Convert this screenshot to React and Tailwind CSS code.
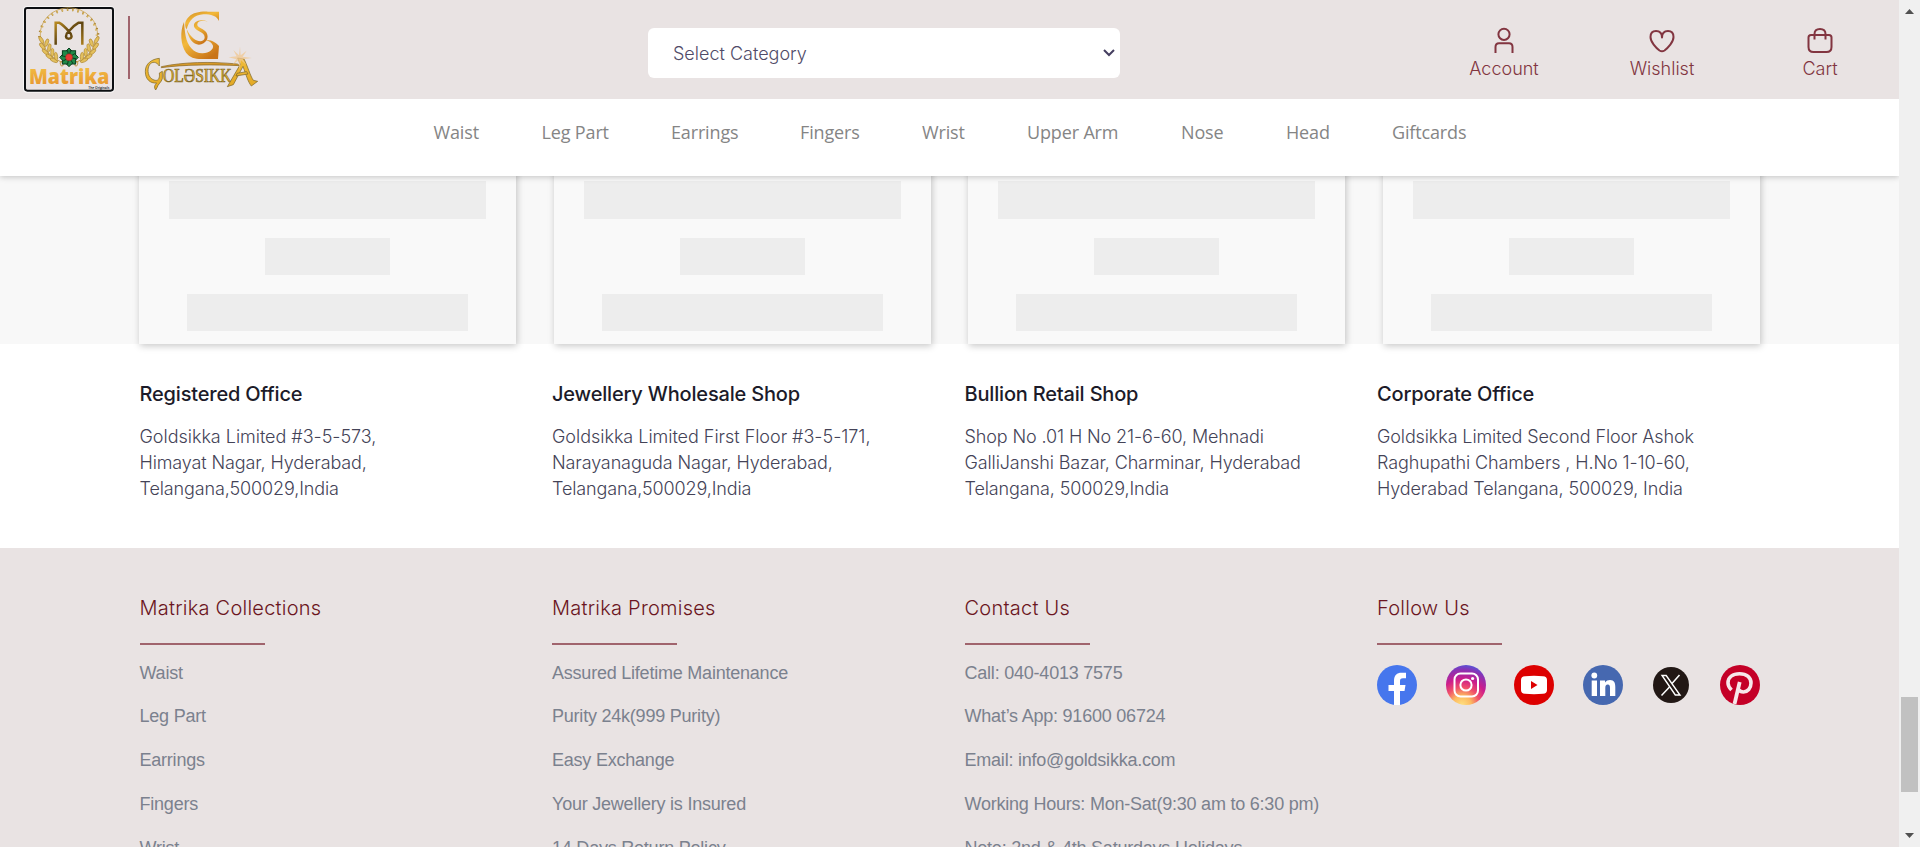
import React from "react";

const navItems = [
  ["Waist", "w-[108px]"],
  ["Leg Part", "w-[129.5px]"],
  ["Earrings", "w-[129px]"],
  ["Fingers", "w-[122px]"],
  ["Wrist", "w-[105px]"],
  ["Upper Arm", "w-[154px]"],
  ["Nose", "w-[105px]"],
  ["Head", "w-[106px]"],
  ["Giftcards", "w-[80px]"],
];

const normal = "block tracking-[-0.12px]";
const wide = "block tracking-[-0.03px]";

const offices = [
  ["Registered Office", [["Goldsikka Limited #3-5-573,", wide], ["Himayat Nagar, Hyderabad,", normal], ["Telangana,500029,India", normal]]],
  ["Jewellery Wholesale Shop", [["Goldsikka Limited First Floor #3-5-171,", wide], ["Narayanaguda Nagar, Hyderabad,", normal], ["Telangana,500029,India", normal]]],
  ["Bullion Retail Shop", [["Shop No .01 H No 21-6-60, Mehnadi", normal], ["GalliJanshi Bazar, Charminar, Hyderabad", normal], ["Telangana, 500029,India", normal]]],
  ["Corporate Office", [["Goldsikka Limited Second Floor Ashok", normal], ["Raghupathi Chambers , H.No 1-10-60,", normal], ["Hyderabad Telangana, 500029, India", normal]]],
];

const footerColumns = [
  ["Matrika Collections", ["Waist", "Leg Part", "Earrings", "Fingers", "Wrist"]],
  ["Matrika Promises", ["Assured Lifetime Maintenance", "Purity 24k(999 Purity)", "Easy Exchange", "Your Jewellery is Insured", "14 Days Return Policy"]],
  ["Contact Us", ["Call: 040-4013 7575", "What’s App: 91600 06724", "Email: info@goldsikka.com", "Working Hours: Mon-Sat(9:30 am to 6:30 pm)", "Note: 2nd & 4th Saturdays Holidays"]],
];

// Leaves of the left laurel branch: x, y, rotation
const leaves = [
  [64, 108, 60], [67, 127, 50], [76, 144, 42], [88, 158, 34], [102, 169, 24],
  [80, 116, 110], [88, 131, 100], [97, 145, 92], [108, 157, 84],
];

function LaurelBranch() {
  return (
    <g fill="#e3c05e" stroke="#a67c26" strokeWidth="1.6">
      <path d="M66 112Q80 158 132 178" fill="none" stroke="#b48a30" strokeWidth="2.500" />
      {leaves.map(([x, y, r]) => (
        <ellipse key={x + "-" + y} cx={x} cy={y} rx="12" ry="5" transform={`rotate(${r} ${x} ${y})`} />
      ))}
      <path d="M124 186Q116 174 126 172Q136 176 128 186Z" fill="none" stroke="#b9872c" strokeWidth="2.500" />
    </g>
  );
}

function MatrikaLogo() {
  return (
    <svg width="100" height="92" viewBox="0 0 300 276" className="shrink-0">
      <defs>
        <linearGradient id="mText" x1="0" y1="0" x2="0" y2="1">
          <stop offset="0" stopColor="#f5c94a" />
          <stop offset="1" stopColor="#e58f2b" />
        </linearGradient>
        <linearGradient id="mMono" x1="0" y1="0" x2="1" y2="1">
          <stop offset="0" stopColor="#b88a22" />
          <stop offset="0.5" stopColor="#5d4310" />
          <stop offset="1" stopColor="#a87c1c" />
        </linearGradient>
      </defs>
      <rect x="9" y="6" width="275" height="260" rx="12" fill="#f7f5f5" />
      <rect x="15" y="12" width="264" height="248" rx="7" fill="#e9e3e3" stroke="#0d0f12" strokeWidth="6" />
      <path d="M61 100A86 80 0 1 1 232 100" fill="none" stroke="#cba450" strokeWidth="2.500" />
      <path d="M58 100A88 82 0 1 1 235 100" fill="none" stroke="#a8802f" strokeWidth="7" strokeDasharray="4 12" />
      <path d="M62 95A83 77 0 1 1 230 95" fill="none" stroke="#d6b35c" strokeWidth="6" strokeDasharray="4 12" strokeDashoffset="6" />
      <LaurelBranch />
      <g transform="translate(294 0) scale(-1 1)"><LaurelBranch /></g>
      <path d="M107 122V56H117C128 62 138 72 147 83C158 92 157 104 146 104C136 104 135 92 145 83C154 72 165 62 176 56H187V122" fill="none" stroke="url(#mMono)" strokeWidth="7.500" />
      {[0, 45, 90, 135, 180, 225, 270, 315].map((r) => (
        <path key={r} d="M147 160L136 143L147 132L158 143Z" fill="#1f8a48" stroke="#0c3f20" strokeWidth="3" transform={`rotate(${r} 147 160)`} />
      ))}
      <circle cx="147" cy="160" r="10.500" fill="#e63a33" stroke="#8f2420" strokeWidth="1.500" />
      <text x="27" y="239" fontSize="64" fontWeight="800" fontFamily="'Open Sans', sans-serif" textLength="241" lengthAdjust="spacingAndGlyphs" fill="url(#mText)">Matrika</text>
      <text x="205" y="254" fontSize="11" fontWeight="600" fontFamily="'Open Sans', sans-serif" textLength="63" lengthAdjust="spacingAndGlyphs" fill="#15171a">The Originals</text>
    </svg>
  );
}

function GoldsikkaLogo() {
  return (
    <svg width="124" height="92" viewBox="0 0 372 276" className="shrink-0">
      <defs>
        <linearGradient id="gMark" x1="0" y1="0" x2="0.7" y2="1">
          <stop offset="0" stopColor="#cf8b24" />
          <stop offset="0.45" stopColor="#f3b93a" />
          <stop offset="1" stopColor="#c97418" />
        </linearGradient>
        <linearGradient id="gText" x1="0" y1="0" x2="0" y2="1">
          <stop offset="0" stopColor="#f0bd3a" />
          <stop offset="1" stopColor="#e3a824" />
        </linearGradient>
      </defs>
      <g fill="url(#gMark)">
        <path d="M237 23V51C230 36 214 31 190 31C164 32 146 50 140 76C131 62 136 48 147 38C160 26 180 22 204 23Z" />
        <path d="M132 54C119 82 122 124 138 146C149 160 164 165 184 165H234L237 126C226 113 212 107 194 107C208 110 216 116 219 125C221 136 208 146 188 148C162 149 142 126 137 96C134 80 133 66 132 54Z" />
        <path d="M203 53C181 42 156 53 163 70C170 84 195 84 194 101C192 118 160 118 140 76C146 108 164 127 184 121C204 114 208 94 196 82C184 71 170 70 172 60C174 51 188 48 203 53Z" />
      </g>
      <path d="M64 188C130 174 210 172 292 180L300 185C220 181 130 182 64 191Z" fill="#d99b2a" stroke="#80601f" strokeWidth="2" />
      <g fill="url(#gText)" stroke="#806a2a" strokeWidth="2.200">
        <path d="M58 163V186C50 173 36 171 28 183C20 198 24 222 42 228C54 232 60 225 58 207L67 202V224C64 235 54 240 51 251L47 258C41 249 44 243 50 237C30 239 16 225 16 203C15 179 36 165 58 163Z" />
        <text x="69" y="234" fontSize="56" fontFamily="'Liberation Serif', serif" textLength="206" lengthAdjust="spacingAndGlyphs">OLƏSIKK</text>
        <path d="M293 162L312 165C324 189 330 214 340 229L353 232L334 246C324 234 318 212 309 187L280 242L262 248L301 181Z" />
        <path d="M291 208L320 203L324 210L288 216Z" />
      </g>
      <path d="M300 128L302 154L320 140L308 158L335 162L308 166L320 184L303 169L299 198L295 169L278 182L289 166L266 160L290 157L280 138L297 154Z" fill="#f0c893" opacity="0.75" />
    </svg>
  );
}

function Action({ label, children }) {
  return (
    <a className="flex w-[158px] flex-col items-center text-[#823540]">
      <svg width="26" height="26" viewBox="0 0 26 26" fill="none" stroke="currentColor" strokeWidth="2" strokeLinejoin="round">
        {children}
      </svg>
      <span className="mt-[3px] text-[18px] font-light leading-[26px]">{label}</span>
    </a>
  );
}

function Skeleton() {
  return (
    <div className="flex h-[177px] w-[377px] shrink-0 flex-col items-center gap-[19px] bg-[#f9f9f9] pt-[14px] shadow-[1px_2px_7px_rgba(0,0,0,0.22)]">
      <div className="h-[38px] w-[317px] bg-[#ededed]" />
      <div className="h-[37px] w-[125px] bg-[#ededed]" />
      <div className="h-[37px] w-[281px] bg-[#ededed]" />
    </div>
  );
}

function FooterTitle({ children }) {
  return (
    <>
      <h3 className="text-[20px] font-light leading-[30px] tracking-[0.24px] text-[#6b1521]">{children}</h3>
      <div className="mt-[20px] h-[2px] w-[125px] bg-[#a0646d]" />
    </>
  );
}

function Socials() {
  return (
    <div className="mt-[20px] flex w-[383px] items-center justify-between">
      <svg width="40" height="40" viewBox="0 0 40 40">
        <circle cx="20" cy="20" r="20" fill="#4676ed" />
        <path d="M17 40V26H11.500V20H17V16C17 10 20 7.700 24.500 7.700H29V13.300H26C23.500 13.300 23 14.500 23 16.500V20H28.500L27.500 26H23V40Z" fill="#fff" />
      </svg>
      <svg width="40" height="40" viewBox="0 0 40 40">
        <defs>
          <radialGradient id="ig" cx="0.4" cy="1" r="1.05">
            <stop offset="0" stopColor="#ffe080" />
            <stop offset="0.22" stopColor="#fdba60" />
            <stop offset="0.42" stopColor="#f0506a" />
            <stop offset="0.62" stopColor="#cc1c8c" />
            <stop offset="0.84" stopColor="#8a32b4" />
            <stop offset="1" stopColor="#4a5de0" />
          </radialGradient>
        </defs>
        <circle cx="20" cy="20" r="20" fill="url(#ig)" />
        <rect x="8.500" y="8.500" width="23.500" height="23" rx="6" fill="none" stroke="#fff" strokeWidth="2" />
        <circle cx="20" cy="20" r="5.600" fill="none" stroke="#fff" strokeWidth="2" />
        <circle cx="26.600" cy="13.500" r="1.600" fill="#fff" />
      </svg>
      <svg width="40" height="40" viewBox="0 0 40 40">
        <circle cx="20" cy="20" r="20" fill="#dd0000" />
        <path d="M11 11.200Q20 10.300 29 11.200Q33 11.500 33 15V25Q33 28.500 29 28.800Q20 29.700 11 28.800Q7 28.500 7 25V15Q7 11.500 11 11.200Z" fill="#fff" />
        <path d="M17 16V24L23.500 20Z" fill="#dd0000" />
      </svg>
      <svg width="40" height="40" viewBox="0 0 40 40">
        <circle cx="20" cy="20" r="20" fill="#4668b0" />
        <circle cx="11.300" cy="10.500" r="2.900" fill="#fff" />
        <path d="M8.700 15.400H14V31H8.700ZM17 15.400H22V17.600C23.200 15.800 25 15 27 15C31.300 15 32.300 18 32.300 22V31H27V23C27 20.800 26.600 19.500 24.800 19.500C22.900 19.500 22.300 21 22.300 23V31H17Z" fill="#fff" />
      </svg>
      <svg width="36" height="36" viewBox="0 0 36 36" className="mx-[2px]">
        <circle cx="18" cy="18" r="18" fill="#221815" />
        <path d="M9 8.500H13.200L27 28H22.300Z" fill="none" stroke="#fff" strokeWidth="1.400" />
        <path d="M26.500 8L19 16.500M16.500 20L8.500 28.500" fill="none" stroke="#fff" strokeWidth="1.500" />
      </svg>
      <svg width="40" height="40" viewBox="0 0 40 40">
        <circle cx="20" cy="20" r="20" fill="#c40027" />
        <path d="M11.500 25C9 22.500 8 20.500 8 18C8 12 13 8.700 19.500 8.700C27 8.700 31 13 31 18C31 23.500 27.500 27 23.500 27C21 27 19.500 26 18.800 24.500" fill="none" stroke="#f7e7ea" strokeWidth="3.600" />
        <path d="M19.700 17L14.500 39" fill="none" stroke="#f7e7ea" strokeWidth="3.800" />
      </svg>
    </div>
  );
}

export default function App() {
  return (
    <div className="flex h-[847px] w-[1920px] overflow-hidden bg-white font-['Inter',sans-serif]">
      <div className="flex w-[1899px] flex-col">
        <div className="relative z-10 shrink-0 shadow-[0_1px_6px_rgba(0,0,0,0.22)]">
          <header className="flex h-[99px] items-start bg-[#e9e3e3]">
            <div className="flex w-[648px] items-start pl-[20px] pt-[4px]">
              <MatrikaLogo />
              <div className="ml-[8px] mt-[12px] h-[63px] w-[2px] bg-[#a0646d]" />
              <div className="ml-[10px]"><GoldsikkaLogo /></div>
            </div>
            <div className="mt-[28px] flex h-[50px] w-[472px] items-center justify-between rounded-[6px] bg-white pl-[25px] pr-[5px] text-[18px] font-light text-[#504b68]">
              <span>Select Category</span>
              <svg width="12" height="8" viewBox="0 0 12 8" fill="none" stroke="#453f60" strokeWidth="2"><path d="M1 1L6 6L11 1" /></svg>
            </div>
            <div className="ml-[305px] flex pt-[27px]">
              <Action label="Account">
                <circle cx="13" cy="7.300" r="5.600" />
                <path d="M4.500 26V20Q4.500 16.300 8 16.300H18Q21.500 16.300 21.500 20V26" />
              </Action>
              <Action label="Wishlist">
                <path d="M13 10.500Q13 4 7 4Q1.500 4 1.500 10C1.500 15 7 21 10.500 23.500Q13 25 15.500 23.500C19 21 24.500 15 24.500 10Q24.500 4 19 4Q13 4 13 10.500Z" />
              </Action>
              <Action label="Cart">
                <path d="M4 8H22Q24.500 8 24.500 10.500V20Q24.500 25 19.500 25H6.500Q1.500 25 1.500 20V10.500Q1.500 8 4 8ZM7.500 12.500V7Q7.500 2 13 2Q18.500 2 18.500 7V12.500" />
              </Action>
            </div>
          </header>
          <nav className="flex h-[77px] bg-white pl-[433.5px] pt-[20px] font-['Open_Sans',sans-serif] text-[18px] leading-[26px] tracking-[-0.15px] text-[#858585]">
            {navItems.map(([label, width]) => (
              <a key={label} className={"shrink-0 whitespace-nowrap " + width}>{label}</a>
            ))}
          </nav>
        </div>
        <section className="-mt-[9px] flex h-[177px] shrink-0 gap-[37.5px] bg-[#f8f8f8] pl-[139.4px]">
          <Skeleton /><Skeleton /><Skeleton /><Skeleton />
        </section>
        <section className="flex h-[204px] shrink-0 pl-[139.5px] pt-[35px]">
          {offices.map(([title, lines]) => (
            <div key={title} className="w-[412.5px] shrink-0 whitespace-nowrap">
              <h2 className="text-[20px] font-medium leading-[30px] tracking-[-0.18px] text-[#1c1b29]">{title}</h2>
              <p className="mt-[15px] text-[18px] font-light leading-[26px] text-[#444357]">
                {lines.map(([text, spacing]) => <span key={text} className={spacing}>{text}</span>)}
              </p>
            </div>
          ))}
        </section>
        <footer className="flex h-[299px] shrink-0 overflow-hidden bg-[#e9e3e3] pl-[139.5px] pt-[45px]">
          {footerColumns.map(([title, links]) => (
            <div key={title} className="w-[412.5px] shrink-0 whitespace-nowrap">
              <FooterTitle>{title}</FooterTitle>
              <ul className="mt-[14.7px] font-['Liberation_Sans',sans-serif] text-[18px] leading-[26px] tracking-[-0.22px] text-[#7b818e]">
                {links.map((l) => <li key={l} className="h-[43.75px]">{l}</li>)}
              </ul>
            </div>
          ))}
          <div className="shrink-0">
            <FooterTitle>Follow Us</FooterTitle>
            <Socials />
          </div>
        </footer>
      </div>
      <div className="relative z-20 flex w-[21px] flex-col items-center bg-[#f0f0f0]">
        <svg width="9" height="5" viewBox="0 0 9 5" className="mt-[9px] shrink-0"><path d="M0 5L4.500 0L9 5Z" fill="#505050" /></svg>
        <div className="mt-[683px] h-[95px] w-[17px] shrink-0 bg-[#c1c1c1]" />
        <svg width="9" height="5" viewBox="0 0 9 5" className="mt-[41px] shrink-0"><path d="M0 0H9L4.500 5Z" fill="#505050" /></svg>
      </div>
    </div>
  );
}
